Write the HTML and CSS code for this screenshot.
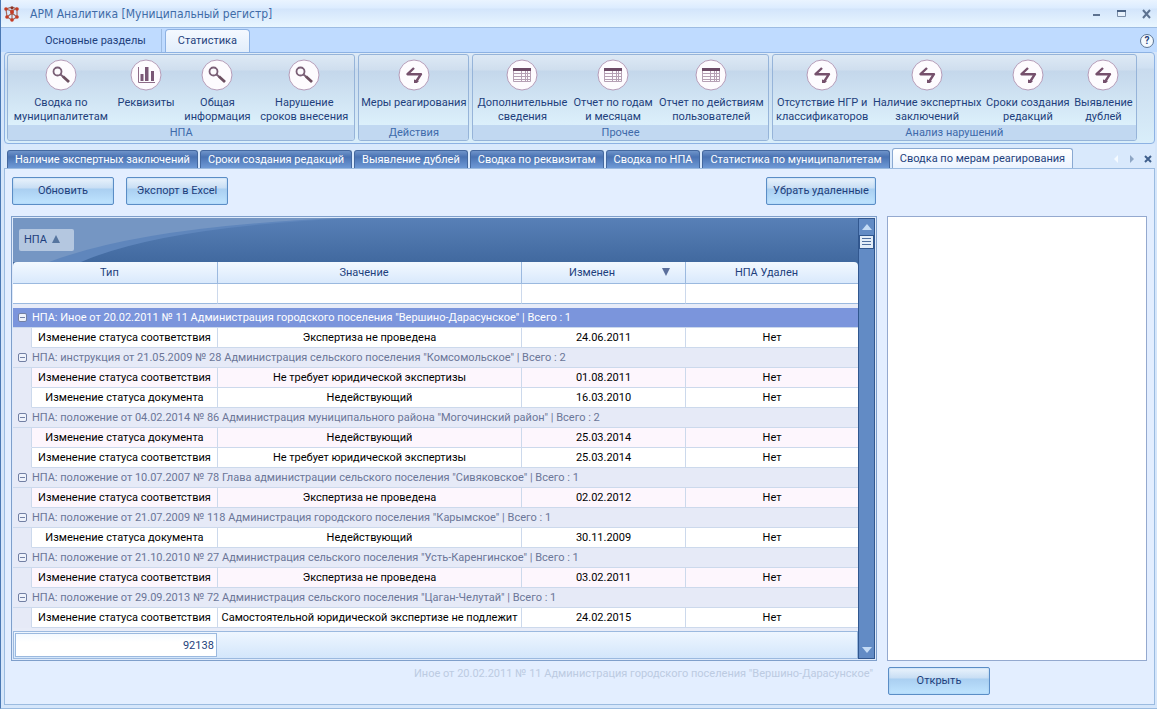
FILE: index.html
```html
<!DOCTYPE html>
<html lang="ru">
<head>
  <meta charset="UTF-8" />
  <meta name="viewport" content="width=device-width, initial-scale=1" />
  <title>АРМ Аналитика [Муниципальный регистр]</title>
  <link rel="stylesheet" href="styles.css">
</head>
<body>
  <!-- shared icons -->
  <svg class="sprite" aria-hidden="true">
    <symbol id="i-search" viewBox="0 0 32 32">
      <circle cx="16" cy="16" r="15" fill="#fdfbfe" stroke="#b59cb8"/>
      <circle cx="12.500" cy="12.500" r="4" fill="none" stroke="#7a5f76" stroke-width="1.800"/>
      <path d="M15.500 15.500l3 2.500" stroke="#7a5f76" stroke-width="2" fill="none"/>
      <path d="M18 17.500l6 5.500" stroke="#6c4f60" stroke-width="2.800" fill="none"/>
    </symbol>
    <symbol id="i-chart" viewBox="0 0 32 32">
      <circle cx="16" cy="16" r="15" fill="#fdfbfe" stroke="#b59cb8"/>
      <path d="M8.500 8v15.500H25" fill="none" stroke="#8d6c88"/>
      <path d="M10.500 15h3v7h-3zM15 8h3.500v14H15zM21 12h3v10h-3z" fill="#7a5876"/>
    </symbol>
    <symbol id="i-table" viewBox="0 0 32 32">
      <circle cx="16" cy="16" r="15" fill="#fdfbfe" stroke="#b59cb8"/>
      <path d="M7.500 12v10.500h17V12M7 14.500h18M7 17.500h18M7 20.500h18M15.500 12v10M19.500 12v10M21.500 12v10" fill="none" stroke="#b5a0b4"/>
      <path d="M7 9h18v3H7z" fill="#6c4a66"/>
    </symbol>
    <symbol id="i-react" viewBox="0 0 32 32">
      <circle cx="16" cy="16" r="15" fill="#fdfbfe" stroke="#b59cb8"/>
      <path d="M16 9l-6.500 6.200H23L18.500 22" fill="none" stroke="#75506c" stroke-width="2.400" stroke-linejoin="round"/>
      <path d="M16 20.500l5 1.500-2 2h-3z" fill="#75506c"/>
    </symbol>
  </svg>

  <header class="titlebar">
    <svg class="logo" width="16" height="16" viewBox="0 0 16 16" aria-hidden="true">
      <path d="M2 3l6 2 5-3M2 3l1 8 5 3 5-3V3M8 5v9M3 11l5-4 5 4M2 3l6-2 5 2" fill="none" stroke="#a5685c" stroke-width="1.200"/>
      <g fill="#c43c24">
        <circle cx="2" cy="3" r="1.800"/><circle cx="13" cy="3" r="1.800"/>
        <circle cx="8" cy="6" r="2"/><circle cx="3" cy="11" r="1.800"/>
        <circle cx="13" cy="11" r="1.800"/><circle cx="8" cy="14" r="1.800"/>
        <circle cx="8" cy="2" r="1.500" fill="#8a3427"/>
      </g>
    </svg>
    <h1>АРМ Аналитика [Муниципальный регистр]</h1>
    <div class="window-buttons">
      <button type="button" aria-label="Свернуть"><svg width="12" height="12"><path d="M2 6h7v2H2z" fill="#5d7290"/></svg></button>
      <button type="button" aria-label="Развернуть"><svg width="12" height="12"><path d="M1.500 2.500h8v6h-8z" fill="#e8f2fc" stroke="#7b8ea8"/><path d="M1 2h9v2H1z" fill="#4a6284"/></svg></button>
      <button type="button" aria-label="Закрыть"><svg width="12" height="12"><path d="M2 2l7 8M9 2l-7 8" stroke="#5d7290" stroke-width="2"/></svg></button>
    </div>
  </header>

  <nav class="ribbon-tabs">
    <button type="button" class="ribbon-tab">Основные разделы</button>
    <button type="button" class="ribbon-tab active">Статистика</button>
    <button type="button" class="help" aria-label="Справка">?</button>
  </nav>

  <div class="ribbon">
    <section class="group">
      <div class="group-items">
        <button type="button"><svg><use href="#i-search"/></svg>Сводка по<br>муниципалитетам</button>
        <button type="button"><svg><use href="#i-chart"/></svg>Реквизиты</button>
        <button type="button"><svg><use href="#i-search"/></svg>Общая<br>информация</button>
        <button type="button"><svg><use href="#i-search"/></svg>Нарушение<br>сроков внесения</button>
      </div>
      <h2>НПА</h2>
    </section>
    <section class="group">
      <div class="group-items">
        <button type="button"><svg><use href="#i-react"/></svg>Меры реагирования</button>
      </div>
      <h2>Действия</h2>
    </section>
    <section class="group">
      <div class="group-items">
        <button type="button"><svg><use href="#i-table"/></svg>Дополнительные<br>сведения</button>
        <button type="button"><svg><use href="#i-table"/></svg>Отчет по годам<br>и месяцам</button>
        <button type="button"><svg><use href="#i-table"/></svg>Отчет по действиям<br>пользователей</button>
      </div>
      <h2>Прочее</h2>
    </section>
    <section class="group">
      <div class="group-items">
        <button type="button"><svg><use href="#i-react"/></svg>Отсутствие НГР и<br>классификаторов</button>
        <button type="button"><svg><use href="#i-react"/></svg>Наличие экспертных<br>заключений</button>
        <button type="button"><svg><use href="#i-react"/></svg>Сроки создания<br>редакций</button>
        <button type="button"><svg><use href="#i-react"/></svg>Выявление<br>дублей</button>
      </div>
      <h2>Анализ нарушений</h2>
    </section>
  </div>

  <nav class="doc-tabs">
    <button type="button">Наличие экспертных заключений</button>
    <button type="button">Сроки создания редакций</button>
    <button type="button">Выявление дублей</button>
    <button type="button">Сводка по реквизитам</button>
    <button type="button">Сводка по НПА</button>
    <button type="button">Статистика по муниципалитетам</button>
    <button type="button" class="active">Сводка по мерам реагирования</button>
    <div class="tab-nav">
      <button type="button" aria-label="Назад"><svg width="8" height="10"><path d="M6 1v8L2 5z" fill="#f4faff"/></svg></button>
      <button type="button" aria-label="Вперед"><svg width="8" height="10"><path d="M2 1v8l4-4z" fill="#8ea6c4"/></svg></button>
      <button type="button" aria-label="Закрыть вкладку"><svg width="8" height="10"><path d="M1 2l6 6M7 2L1 8" stroke="#3f5f8c" stroke-width="2"/></svg></button>
    </div>
  </nav>

  <main class="page">
    <div class="left">
      <div class="toolbar">
        <button type="button" class="btn">Обновить</button>
        <button type="button" class="btn">Экспорт в Excel</button>
        <button type="button" class="btn wide">Убрать удаленные</button>
      </div>

      <div class="grid">
        <div class="grid-body">
          <div class="group-panel">
            <svg class="swoosh" viewBox="0 0 845 43" preserveAspectRatio="none" aria-hidden="true">
              <path d="M0 0H345Q150 8 68 43H0z" fill="#5f86bc"/>
              <path d="M0 0H330Q130 8 36 43H0z" fill="#7596c3"/>
            </svg>
            <button type="button" class="group-chip">НПА <svg width="8" height="8"><path d="M4 0l4 8H0z" fill="#56759f"/></svg></button>
          </div>
          <table>
            <colgroup><col class="c-indent"><col class="c-type"><col class="c-value"><col class="c-date"><col></colgroup>
            <thead>
              <tr>
                <th colspan="2">Тип</th>
                <th>Значение</th>
                <th class="sorted">Изменен<svg width="8" height="8"><path d="M0 0h8L4 8z" fill="#5b6f9c"/></svg></th>
                <th>НПА Удален</th>
              </tr>
              <tr class="filter">
                <td colspan="2"><input type="text" aria-label="Фильтр: Тип"></td>
                <td><input type="text" aria-label="Фильтр: Значение"></td>
                <td><input type="text" aria-label="Фильтр: Изменен"></td>
                <td><input type="text" aria-label="Фильтр: НПА Удален"></td>
              </tr>
            </thead>
            <tbody>
              <tr class="grp selected"><td colspan="5"><button type="button" class="toggle" aria-label="Свернуть группу"></button>НПА: Иное от 20.02.2011 № 11 Администрация городского поселения "Вершино-Дарасунское" | Всего : 1</td></tr>
              <tr><td></td><td>Изменение статуса соответствия</td><td>Экспертиза не проведена</td><td>24.06.2011</td><td>Нет</td></tr>
              <tr class="grp"><td colspan="5"><button type="button" class="toggle" aria-label="Свернуть группу"></button>НПА: инструкция от 21.05.2009 № 28 Администрация сельского поселения "Комсомольское" | Всего : 2</td></tr>
              <tr class="odd"><td></td><td>Изменение статуса соответствия</td><td>Не требует юридической экспертизы</td><td>01.08.2011</td><td>Нет</td></tr>
              <tr><td></td><td>Изменение статуса документа</td><td>Недействующий</td><td>16.03.2010</td><td>Нет</td></tr>
              <tr class="grp"><td colspan="5"><button type="button" class="toggle" aria-label="Свернуть группу"></button>НПА: положение от 04.02.2014 № 86 Администрация муниципального района "Могочинский район" | Всего : 2</td></tr>
              <tr class="odd"><td></td><td>Изменение статуса документа</td><td>Недействующий</td><td>25.03.2014</td><td>Нет</td></tr>
              <tr><td></td><td>Изменение статуса соответствия</td><td>Не требует юридической экспертизы</td><td>25.03.2014</td><td>Нет</td></tr>
              <tr class="grp"><td colspan="5"><button type="button" class="toggle" aria-label="Свернуть группу"></button>НПА: положение от 10.07.2007 № 78 Глава администрации сельского поселения "Сивяковское" | Всего : 1</td></tr>
              <tr class="odd"><td></td><td>Изменение статуса соответствия</td><td>Экспертиза не проведена</td><td>02.02.2012</td><td>Нет</td></tr>
              <tr class="grp"><td colspan="5"><button type="button" class="toggle" aria-label="Свернуть группу"></button>НПА: положение от 21.07.2009 № 118 Администрация городского поселения "Карымское" | Всего : 1</td></tr>
              <tr><td></td><td>Изменение статуса документа</td><td>Недействующий</td><td>30.11.2009</td><td>Нет</td></tr>
              <tr class="grp"><td colspan="5"><button type="button" class="toggle" aria-label="Свернуть группу"></button>НПА: положение от 21.10.2010 № 27 Администрация сельского поселения "Усть-Каренгинское" | Всего : 1</td></tr>
              <tr class="odd"><td></td><td>Изменение статуса соответствия</td><td>Экспертиза не проведена</td><td>03.02.2011</td><td>Нет</td></tr>
              <tr class="grp"><td colspan="5"><button type="button" class="toggle" aria-label="Свернуть группу"></button>НПА: положение от 29.09.2013 № 72 Администрация сельского поселения "Цаган-Челутай" | Всего : 1</td></tr>
              <tr><td></td><td>Изменение статуса соответствия</td><td>Самостоятельной юридической экспертизе не подлежит</td><td>24.02.2015</td><td>Нет</td></tr>
            </tbody>
          </table>
          <div class="grid-footer"><output>92138</output></div>
        </div>
        <div class="scrollbar">
          <button type="button" aria-label="Вверх"><svg width="10" height="6"><path d="M5 0l5 6H0z" fill="#c4dbf5"/></svg></button>
          <div class="thumb"></div>
          <button type="button" class="down" aria-label="Вниз"><svg width="10" height="6"><path d="M0 0h10L5 6z" fill="#c4dbf5"/></svg></button>
        </div>
      </div>
      <p class="caption">Иное от 20.02.2011 № 11 Администрация городского поселения "Вершино-Дарасунское"</p>
    </div>

    <div class="right">
      <textarea class="preview" aria-label="Просмотр"></textarea>
      <button type="button" class="btn">Открыть</button>
    </div>
  </main>
</body>
</html>
```
FILE: styles.css
```css
* {
  box-sizing: border-box;
  margin: 0;
  padding: 0;
}

body {
  min-height: 100vh;
  display: flex;
  flex-direction: column;
  padding: 0 2px 3px 3px;
  border-left: 1px solid #4a78b4;
  border-bottom: 1px solid #9bbbe0;
  background: #d5e6fb;
  font: 11px/14px Roboto, 'DejaVu Sans Condensed', sans-serif;
  color: #1e3f7c;
}

button,
input,
textarea {
  font: inherit;
  color: inherit;
  border: none;
  background: none;
}

.sprite {
  display: none;
}

/* title bar */
.titlebar {
  display: flex;
  align-items: center;
  height: 27px;
  margin: 0 -2px 0 -3px;
  padding: 0 4px 0 3px;
  background: linear-gradient(#eaf4ff 0, #dcecff 8px, #d3e5fb 9px, #e9f6ff 100%);
}

.titlebar h1 {
  margin-left: 10px;
  font: 12px 'DejaVu Sans Condensed', 'DejaVu Sans', sans-serif;
  color: #3f6ca8;
}

.window-buttons {
  display: flex;
  gap: 13px;
  margin-left: auto;
}

.window-buttons svg,
.tab-nav svg {
  display: block;
}

/* ribbon */
.ribbon-tabs {
  display: flex;
  align-items: flex-end;
  height: 25px;
  margin: 0 -2px 0 -3px;
  padding: 0 3px 0 24px;
  border-top: 1px solid #9dbce2;
  background: #bfdbff;
}

.ribbon-tab {
  height: 23px;
  padding: 0 15px 0 20px;
  border-right: 1px solid #9dbce2;
}

.ribbon-tab.active {
  padding: 0 12px;
  margin-left: 3px;
  border: 1px solid #8db2e3;
  border-bottom: none;
  border-radius: 4px 4px 0 0;
  background: linear-gradient(#f4f9ff, #e2eefb);
}

.help {
  width: 14px;
  height: 14px;
  margin: 0 0 4px auto;
  border: 1px solid #5c7594;
  border-radius: 50%;
  background: #f4faff;
  font-size: 10px;
  line-height: 12px;
  font-weight: bold;
}

.ribbon {
  display: grid;
  grid-template-columns: 348fr 111fr 296fr 365fr;
  gap: 3px;
  padding: 1px 17px 2px 2px;
  border: 1px solid #8db2e3;
  border-radius: 4px;
  background: linear-gradient(#dfebf7, #cfe0f2 15px, #c9dbee 16px, #d9eefa);
}

.group {
  overflow: hidden;
  display: flex;
  flex-direction: column;
  height: 87px;
  border: 1px solid #96b4d9;
  border-radius: 3px;
  background: linear-gradient(#dde9f5, #cfdeee 15px, #c4d7eb 16px, #dcf0fb 70px);
}

.group-items {
  flex: 1;
  display: flex;
  justify-content: space-around;
  align-items: flex-start;
  padding: 4px 1px 0;
}

.group-items button {
  white-space: nowrap;
}

.group-items svg {
  display: block;
  width: 32px;
  height: 32px;
  margin: 0 auto 5px;
}

.group h2 {
  background: #c1d8f1;
  font-size: 11px;
  font-weight: normal;
  line-height: 15px;
  text-align: center;
  color: #3e6aaa;
}

/* document tabs */
.doc-tabs {
  display: flex;
  align-items: flex-end;
  gap: 2px;
  height: 24px;
  padding: 0 3px;
  background: #d9e9fc;
}

.doc-tabs > button {
  height: 18px;
  padding: 0 7px;
  border: 1px solid #44689f;
  border-bottom: none;
  border-radius: 3px 3px 0 0;
  background: linear-gradient(#6f94ca, #4a73b3 6px, #6f9ad6);
  white-space: nowrap;
  color: #fff;
}

.doc-tabs > button.active {
  height: 20px;
  border-color: #8aa9d2;
  background: linear-gradient(#fff, #eaf3ff);
  color: #1e3f7c;
}

.tab-nav {
  display: flex;
  gap: 8px;
  height: 18px;
  margin-left: auto;
}

/* page */
.page {
  flex: 1;
  display: grid;
  grid-template-columns: 866fr 260fr;
  gap: 10px;
  padding: 8px 7px 9px 6px;
  border: 1px solid #9bbbe0;
  background: #e3eeff;
}

.left,
.right {
  display: flex;
  flex-direction: column;
}

.toolbar {
  display: flex;
  gap: 12px;
  padding: 0 1px;
  margin-bottom: 11px;
}

.btn {
  width: 102px;
  height: 28px;
  border: 1px solid #5a8dc6;
  border-radius: 2px;
  box-shadow: inset 0 0 2px #9cc4ec;
  background: linear-gradient(#eaf3fc, #c8def4 10px, #aacff1 11px, #bfe4ff);
}

.btn.wide {
  width: 110px;
  margin-left: auto;
}

.grid {
  display: flex;
  padding: 1px;
  border: 1px solid #7f9fcb;
  background: #dfeafa;
}

.grid-body {
  flex: 1;
  background: #e8ecf8;
}

.group-panel {
  position: relative;
  height: 44px;
  padding: 11px 6px;
  background: linear-gradient(#5880b7, #41699f);
}

.swoosh {
  position: absolute;
  inset: 0;
  width: 100%;
  height: 100%;
}

.group-chip {
  position: relative;
  width: 55px;
  height: 22px;
  padding-left: 5px;
  border-radius: 2px;
  background: #b4c7e0;
  text-align: left;
}

.group-chip svg {
  margin-left: 2px;
}

table {
  width: 100%;
  table-layout: fixed;
  border-spacing: 0;
  background: linear-gradient(#41699f 0 10px, transparent 10px);
}

.c-indent {
  width: 19px;
}

.c-type {
  width: 22%;
}

.c-value {
  width: 36%;
}

.c-date {
  width: 19.4%;
}

th {
  height: 22px;
  padding: 1px 11px 0 0;
  border-right: 1px solid #9bb9df;
  border-bottom: 1px solid #9bb9df;
  background: linear-gradient(#f3f9ff, #d9e9fc);
  font-weight: normal;
}

th:first-child {
  border-top-left-radius: 4px;
}

th:last-child {
  border-top-right-radius: 4px;
}

th svg {
  float: right;
  margin: 2px 4px 0 0;
}

td {
  overflow: hidden;
  height: 20px;
  border-right: 1px solid #ccd9ec;
  border-bottom: 1px solid #ccd9ec;
  background: #fff;
  text-align: center;
  white-space: nowrap;
  color: #000;
}

tr > :last-child {
  border-right: none;
}

.filter input {
  display: block;
  width: 100%;
  height: 19px;
}

.filter td {
  border-bottom-color: #9bb9df;
}

thead::after {
  content: "";
  display: block;
  height: 4px;
}

.odd td {
  background: #fdf6fd;
}

tbody td:first-child {
  background: #e6eaf7;
}

tbody tr:not(.grp) td:first-child {
  border-bottom-color: #e6eaf7;
}

tbody .grp td {
  text-align: left;
  color: #6b7698;
}

tbody .selected td {
  background: #7b95dc;
  color: #fff;
}

.toggle {
  width: 9px;
  height: 9px;
  margin: 0 5px 0 5px;
  vertical-align: 0;
  border: 1px solid #7280a4;
  border-radius: 2px;
  background: linear-gradient(#7280a4, #7280a4) center / 5px 1px no-repeat #eef2fb;
}

.grid-footer {
  margin-top: 3px;
  padding: 1px;
  border: 1px solid #9bb9df;
  background: linear-gradient(#eef6ff, #d3e6fb);
}

.grid-footer output {
  display: block;
  width: 24%;
  padding: 5px 2px 3px;
  border: 1px solid #9bb9df;
  background: linear-gradient(#f3f9ff, #fff 8px);
  text-align: right;
}

.scrollbar {
  display: flex;
  flex-direction: column;
  width: 17px;
  border: 1px solid #31578f;
  background: #628bc5;
}

.scrollbar button {
  height: 16px;
}

.scrollbar svg {
  display: block;
  margin: 0 auto;
}

.thumb {
  height: 14px;
  border: 1px solid #31578f;
  background: repeating-linear-gradient(#4f6f9f 0 1px, #e3edf8 1px 3px) center / 9px 9px no-repeat #e3edf8;
}

.scrollbar .down {
  margin-top: auto;
}

.caption {
  padding: 6px 4px 0 0;
  text-align: right;
  color: #bccbe2;
}

.right {
  padding-top: 39px;
}

.preview {
  flex: 1;
  width: 100%;
  border: 1px solid #94a9cf;
  background: #fff;
  resize: none;
}

.right .btn {
  margin: 6px 0 0 1px;
}
```
